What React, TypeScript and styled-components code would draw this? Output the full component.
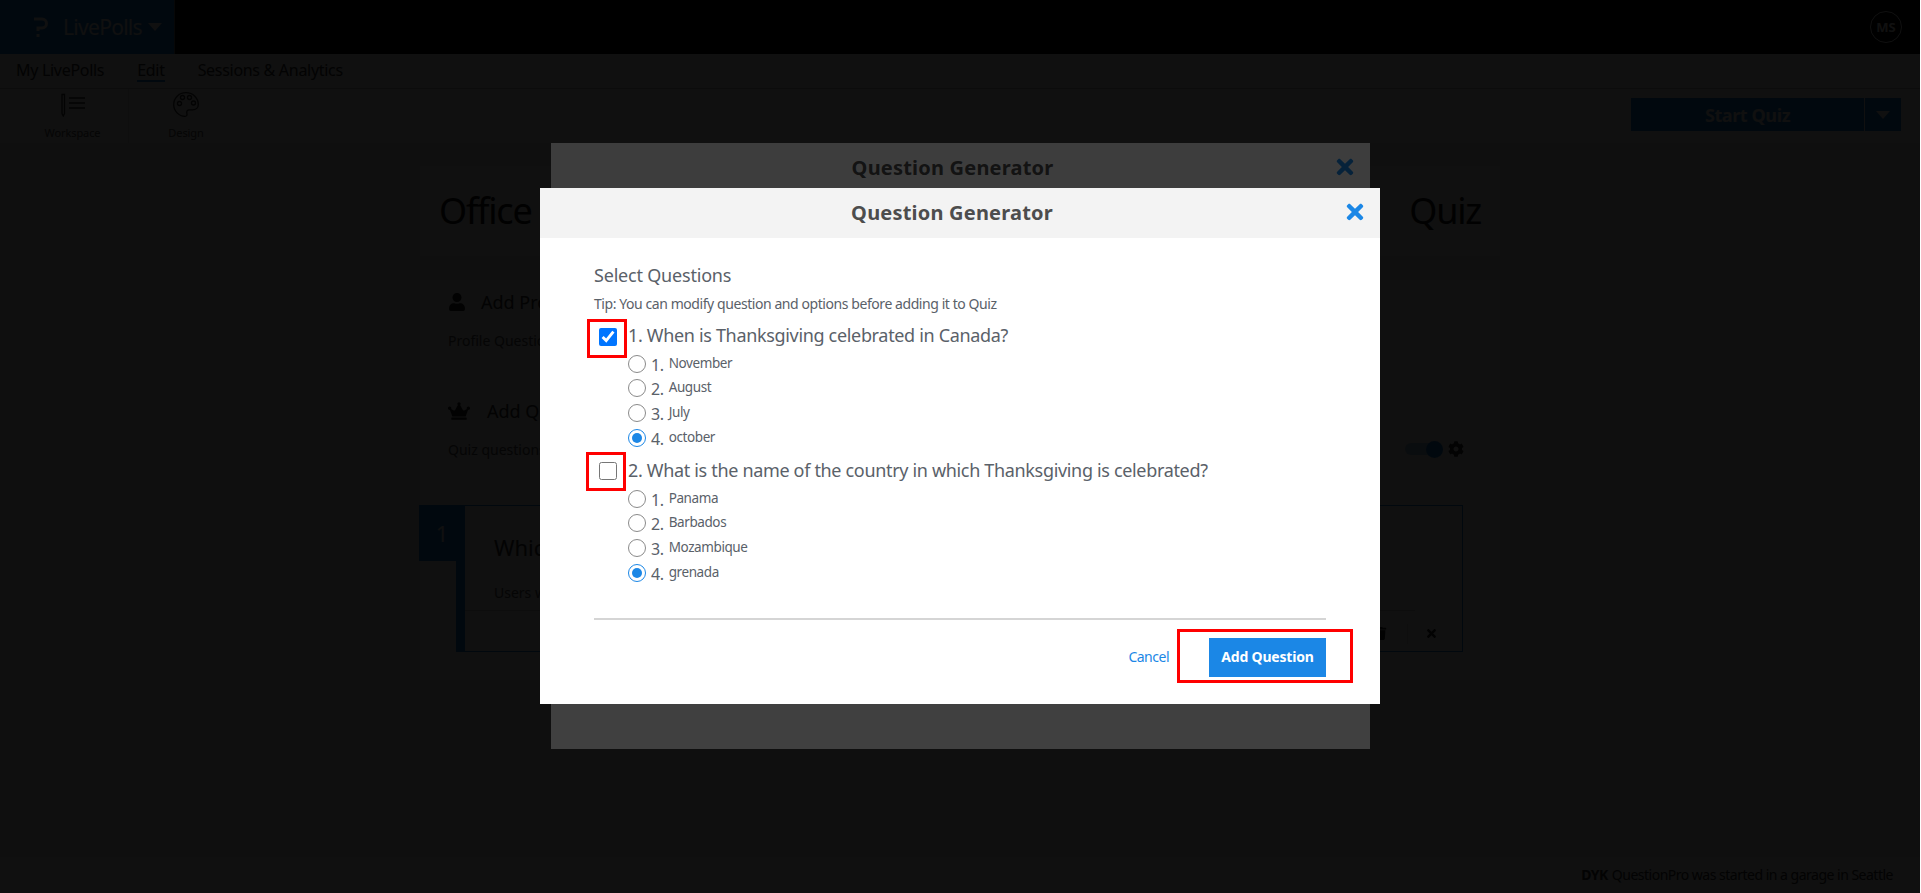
import { createGlobalStyle, styled } from "styled-components";
import { FaCog, FaCrown, FaTimes, FaTrash, FaUser } from "react-icons/fa";

const FONT = `"Noto Sans", "Open Sans", sans-serif`;

const questions = [
  {
    text: "1. When is Thanksgiving celebrated in Canada?",
    checked: true,
    options: ["November", "August", "July", "october"],
  },
  {
    text: "2. What is the name of the country in which Thanksgiving is celebrated?",
    checked: false,
    options: ["Panama", "Barbados", "Mozambique", "grenada"],
  },
];

const GlobalStyle = createGlobalStyle`
  html, body {
    margin: 0;
    height: 100%;
    overflow: hidden;
    background: #fff;
  }
  * { box-sizing: border-box; }
  #root {
    position: relative;
    width: 1920px;
    height: 893px;
    overflow: hidden;
    font-family: ${FONT};
  }
`;

const Page = styled.div`
  display: flex;
  flex-direction: column;
  height: 893px;
  background: #f0f0f0;
  color: #333;
`;

const TopBar = styled.header`
  display: flex;
  align-items: center;
  justify-content: space-between;
  height: 54px;
  padding-right: 18px;
  background: #000;
`;

const Brand = styled.div`
  display: flex;
  align-items: center;
  width: 175px;
  height: 54px;
  padding-left: 33px;
  background: #1b87e6;
  border-right: 1px solid #777;
  color: #fff;
  font-size: 21px;
`;

const BrandName = styled.span`
  margin: 0 6px 0 15px;
  letter-spacing: -0.7px;
`;

const Avatar = styled.div`
  display: flex;
  align-items: center;
  justify-content: center;
  width: 32px;
  height: 32px;
  border: 1px solid #fff;
  border-radius: 50%;
  color: #fff;
  font-size: 13px;
  font-weight: 700;
`;

const Nav = styled.nav`
  display: flex;
  gap: 33px;
  height: 34px;
  padding: 5px 16px 0;
  background: #fff;
  font-size: 16px;
  letter-spacing: -0.3px;
`;

const NavItem = styled.span<{ $active?: boolean }>`
  height: 23px;
  line-height: 22px;
  border-bottom: 2px solid ${(p) => (p.$active ? "#1b87e6" : "transparent")};
`;

const Toolbar = styled.div`
  display: flex;
  align-items: flex-start;
  height: 55px;
  padding-right: 19px;
  background: #fff;
  border-top: 1px solid #c8c8c8;
`;

const Tool = styled.div<{ $width: number; $inset?: number; $divided?: boolean }>`
  display: flex;
  flex-direction: column;
  align-items: center;
  width: ${(p) => p.$width}px;
  height: 54px;
  padding: 3px 0 0 ${(p) => p.$inset ?? 0}px;
  border-right: 1px solid ${(p) => (p.$divided ? "#e6e6e6" : "transparent")};
  font-size: 11px;
  letter-spacing: -0.1px;
  color: #555;
`;

const ToolLabel = styled.span`
  margin-top: 8px;
  line-height: 16px;
`;

const StartGroup = styled.div`
  display: flex;
  height: 33px;
  margin: 9px 0 0 auto;
  background: #1b87e6;
  color: #fff;
`;

const StartButton = styled.div`
  display: flex;
  align-items: center;
  justify-content: center;
  width: 234px;
  border-right: 1px solid #fff;
  font-size: 18px;
  font-weight: 700;
  letter-spacing: -0.4px;
`;

const StartCaret = styled.div`
  display: flex;
  align-items: center;
  justify-content: center;
  width: 36px;
`;

const Caret = styled.i`
  display: inline-block;
  width: 0;
  height: 0;
  border-left: 7px solid transparent;
  border-right: 7px solid transparent;
  border-top: 8px solid currentColor;
`;

const Content = styled.main`
  display: flex;
  flex-direction: column;
  width: 1080px;
  margin: 23px auto 0;
`;

const TitleCard = styled.div`
  display: flex;
  align-items: center;
  justify-content: space-between;
  height: 90px;
  padding: 0 19px 2px;
  background: #fff;
  font-size: 36px;
  letter-spacing: -1.2px;
  color: #111;
`;

const Panel = styled.section`
  height: 400px;
  margin-top: 24px;
  background: #fff;
`;

const Section = styled.div<{ $height: number }>`
  height: ${(p) => p.$height}px;
  padding: 12px 28px 0;
`;

const SectionHead = styled.div<{ $gap: number; $icon: number }>`
  display: flex;
  align-items: center;
  gap: ${(p) => p.$gap}px;
  height: 20px;
  font-size: 18px;
  svg { font-size: ${(p) => p.$icon}px; color: #222; }
`;

const SectionRow = styled.div`
  display: flex;
  align-items: center;
  justify-content: space-between;
  height: 20px;
  margin-top: 18px;
  font-size: 14px;
  color: #555;
`;

const Toggles = styled.div`
  display: flex;
  align-items: center;
  gap: 5px;
  margin-right: 8px;
  svg { font-size: 16px; color: #333; }
`;

const ToggleTrack = styled.div`
  display: flex;
  align-items: center;
  justify-content: flex-end;
  width: 38px;
  height: 12px;
  border-radius: 6px;
  background: #a9d2f5;
`;

const ToggleKnob = styled.div`
  flex: none;
  width: 17px;
  height: 17px;
  border-radius: 50%;
  background: #1b87e6;
`;

const QuestionCard = styled.div`
  display: flex;
  width: 1007px;
  height: 147px;
  margin-left: 36px;
  border: 1px solid #1b87e6;
  border-left: 9px solid #1b87e6;
`;

const QuestionNumber = styled.div`
  display: flex;
  align-items: center;
  justify-content: center;
  flex: none;
  width: 46px;
  height: 56px;
  margin: -1px 0 0 -46px;
  background: #1b87e6;
  color: #fff;
  font-size: 22px;
`;

const QuestionBody = styled.div`
  display: flex;
  flex-direction: column;
  flex: 1;
  padding-top: 27px;
`;

const QuestionTitle = styled.div`
  padding-left: 29px;
  font-size: 22px;
  line-height: 28px;
`;

const QuestionHint = styled.div`
  margin: 22px 47px 0 0;
  padding: 0 0 7px 29px;
  border-bottom: 1px solid #dcdcdc;
  font-size: 14px;
  line-height: 20px;
  color: #555;
`;

const QuestionActions = styled.div`
  display: flex;
  align-items: center;
  justify-content: flex-end;
  height: 35px;
  margin-top: auto;
  padding-right: 8px;
  font-size: 13px;
  color: #222;
`;

const ActionCell = styled.div<{ $width: number; $divided?: boolean }>`
  display: flex;
  align-items: center;
  justify-content: center;
  width: ${(p) => p.$width}px;
  height: 20px;
  border-left: 1px solid ${(p) => (p.$divided ? "#e6e6e6" : "transparent")};
`;

const StatusBar = styled.footer`
  display: flex;
  align-items: center;
  justify-content: flex-end;
  gap: 4px;
  height: 36px;
  margin-top: auto;
  padding: 0 27px 1px 0;
  background: #fff;
  font-size: 14px;
  letter-spacing: -0.5px;
  color: #333;
  b { font-weight: 700; }
`;

const Backdrop = styled.div`
  position: absolute;
  inset: 0;
  background: rgba(0, 0, 0, 0.75);
`;

const Modal = styled.div<{ $left: number; $top: number; $width: number; $height: number }>`
  position: absolute;
  left: ${(p) => p.$left}px;
  top: ${(p) => p.$top}px;
  width: ${(p) => p.$width}px;
  height: ${(p) => p.$height}px;
  background: #fff;
`;

const ModalHeader = styled.div<{ $height: number; $lift?: number }>`
  display: flex;
  align-items: center;
  justify-content: center;
  position: relative;
  height: ${(p) => p.$height}px;
  padding: 0 16px ${(p) => p.$lift ?? 0}px 0;
  background: #f3f3f3;
  color: #4d4d4d;
  font-size: 20px;
  font-weight: 700;
  letter-spacing: 0.2px;
  svg {
    position: absolute;
    right: 13px;
    color: #1b87e6;
    font-size: 24px;
  }
`;

const ModalBody = styled.div`
  display: flex;
  flex-direction: column;
  padding: 25px 54px 0;
  color: #5a6169;
`;

const Heading = styled.div`
  font-size: 18px;
  line-height: 24px;
  letter-spacing: -0.2px;
`;

const Tip = styled.div`
  margin-top: 7px;
  font-size: 14px;
  line-height: 20px;
  letter-spacing: -0.43px;
`;

const QuestionBlock = styled.div<{ $top: number }>`
  margin-top: ${(p) => p.$top}px;
`;

const QuestionRow = styled.div`
  display: flex;
  align-items: center;
  height: 26px;
  font-size: 18px;
  letter-spacing: -0.33px;
`;

const CheckWrap = styled.span`
  position: relative;
  display: block;
  width: 18px;
  height: 18px;
  margin: 3px 11px 0 5px;
  input {
    display: block;
    width: 18px;
    height: 18px;
    margin: 0;
  }
`;

const Highlight = styled.span<{ $l: number; $t: number; $r: number; $b: number }>`
  position: absolute;
  left: ${(p) => p.$l}px;
  top: ${(p) => p.$t}px;
  right: ${(p) => p.$r}px;
  bottom: ${(p) => p.$b}px;
  border: 3px solid #f00;
`;

const Options = styled.div<{ $top: number }>`
  margin: ${(p) => p.$top}px 0 0 34px;
`;

const OptionRow = styled.div`
  display: flex;
  align-items: center;
  height: 24.6px;
  font-size: 13.5px;
  letter-spacing: -0.4px;
`;

const Radio = styled.span<{ $on?: boolean }>`
  display: flex;
  align-items: center;
  justify-content: center;
  width: 18px;
  height: 18px;
  margin-right: 5px;
  border-radius: 50%;
  border: 1px solid ${(p) => (p.$on ? "#1b87e6" : "#8a8a8a")};
  &::after {
    content: "";
    width: 10px;
    height: 10px;
    border-radius: 50%;
    background: ${(p) => (p.$on ? "#1b87e6" : "transparent")};
  }
`;

const OptionIndex = styled.span`
  margin-right: 5px;
  padding-top: 2px;
  font-size: 16px;
`;

const OptionText = styled.span`
  padding-bottom: 2px;
`;

const Divider = styled.hr`
  height: 2px;
  margin: 33px 0 0;
  border: 0;
  background: #d5d5d5;
`;

const Footer = styled.div`
  display: flex;
  align-items: center;
  justify-content: flex-end;
  gap: 40px;
  margin-top: 18px;
`;

const CancelLink = styled.span`
  padding-bottom: 2px;
  color: #1b87e6;
  font-size: 14px;
  letter-spacing: -0.5px;
`;

const AddButton = styled.div`
  position: relative;
  display: flex;
  align-items: center;
  justify-content: center;
  width: 117px;
  height: 39px;
  padding-bottom: 2px;
  background: #1b87e6;
  color: #fff;
  font-size: 14px;
  font-weight: 700;
  letter-spacing: -0.2px;
`;

const LogoMark = () => (
  <svg width="15" height="21" viewBox="0 0 15 21" fill="none" stroke="#fff" strokeWidth="3">
    <path d="M1 2h8a4.5 4.5 0 0 1 0 9H5v3" />
    <path d="M5 17v3" />
  </svg>
);

const WorkspaceIcon = () => (
  <svg width="24" height="25" viewBox="0 0 24 25" fill="none" stroke="#333" strokeWidth="1.3">
    <path d="M1 2.500h2.500v19L2.250 24 1 21.500z" />
    <path d="M8 6h16M8 11h16M8 16h16" />
  </svg>
);

const DesignIcon = () => (
  <svg width="26" height="25" viewBox="0 0 26 25" fill="none" stroke="#333" strokeWidth="1.3">
    <path d="M13 .7C6 .7.7 6 .7 12.500c0 6.500 5.300 11.800 11.300 11.800 1.800 0 2.300-1.300 1.900-2.800-.6-2 .4-3.600 2.400-3.600h3.200c3.500 0 5.800-2.400 5.800-5.400C25.300 6 20 .7 13 .7z" />
    <circle cx="6.500" cy="11.500" r="2" />
    <circle cx="9.500" cy="5.500" r="2" />
    <circle cx="16.500" cy="5.500" r="2" />
    <circle cx="20.500" cy="11" r="2" />
  </svg>
);

export default function App() {
  return (
    <>
      <GlobalStyle />
      <Page>
        <TopBar>
          <Brand>
            <LogoMark />
            <BrandName>LivePolls</BrandName>
            <Caret />
          </Brand>
          <Avatar>MS</Avatar>
        </TopBar>
        <Nav>
          <NavItem>My LivePolls</NavItem>
          <NavItem $active>Edit</NavItem>
          <NavItem>Sessions &amp; Analytics</NavItem>
        </Nav>
        <Toolbar>
          <Tool $width={129} $inset={17} $divided>
            <WorkspaceIcon />
            <ToolLabel>Workspace</ToolLabel>
          </Tool>
          <Tool $width={115}>
            <DesignIcon />
            <ToolLabel>Design</ToolLabel>
          </Tool>
          <StartGroup>
            <StartButton>Start Quiz</StartButton>
            <StartCaret>
              <Caret />
            </StartCaret>
          </StartGroup>
        </Toolbar>
        <Content>
          <TitleCard>
            <span>Office</span>
            <span>Quiz</span>
          </TitleCard>
          <Panel>
            <Section $height={109}>
              <SectionHead $gap={15} $icon={18}>
                <FaUser />
                Add Profile
              </SectionHead>
              <SectionRow>Profile Question</SectionRow>
            </Section>
            <Section $height={116}>
              <SectionHead $gap={17} $icon={22}>
                <FaCrown />
                Add Quiz
              </SectionHead>
              <SectionRow>
                Quiz questions
                <Toggles>
                  <ToggleTrack>
                    <ToggleKnob />
                  </ToggleTrack>
                  <FaCog />
                </Toggles>
              </SectionRow>
            </Section>
            <QuestionCard>
              <QuestionNumber>1</QuestionNumber>
              <QuestionBody>
                <QuestionTitle>Which</QuestionTitle>
                <QuestionHint>Users will</QuestionHint>
                <QuestionActions>
                  <ActionCell $width={54}>
                    <FaTrash />
                  </ActionCell>
                  <ActionCell $width={47} $divided>
                    <FaTimes />
                  </ActionCell>
                </QuestionActions>
              </QuestionBody>
            </QuestionCard>
          </Panel>
        </Content>
        <StatusBar>
          <b>DYK</b> QuestionPro was started in a garage in Seattle
        </StatusBar>
      </Page>

      <Backdrop />
      <Modal $left={551} $top={143} $width={819} $height={606}>
        <ModalHeader $height={48}>
          Question Generator
          <FaTimes />
        </ModalHeader>
      </Modal>
      <Backdrop />

      <Modal $left={540} $top={188} $width={840} $height={516}>
        <ModalHeader $height={50} $lift={2}>
          Question Generator
          <FaTimes />
        </ModalHeader>
        <ModalBody>
          <Heading>Select Questions</Heading>
          <Tip>Tip: You can modify question and options before adding it to Quiz</Tip>
          {questions.map((q, i) => (
            <QuestionBlock key={q.text} $top={i === 0 ? 8 : 7}>
              <QuestionRow>
                <CheckWrap>
                  <input type="checkbox" checked={q.checked} readOnly />
                  <Highlight
                    $l={i === 0 ? -12 : -13}
                    $t={i === 0 ? -9 : -10}
                    $r={i === 0 ? -10 : -9}
                    $b={i === 0 ? -12 : -11}
                  />
                </CheckWrap>
                {q.text}
              </QuestionRow>
              <Options $top={i === 0 ? 3.6 : 3.5}>
                {q.options.map((opt, n) => (
                  <OptionRow key={opt}>
                    <Radio $on={n === 3} />
                    <OptionIndex>{n + 1}.</OptionIndex>
                    <OptionText>{opt}</OptionText>
                  </OptionRow>
                ))}
              </Options>
            </QuestionBlock>
          ))}
          <Divider />
          <Footer>
            <CancelLink>Cancel</CancelLink>
            <AddButton>
              Add Question
              <Highlight $l={-32} $t={-9} $r={-27} $b={-6} />
            </AddButton>
          </Footer>
        </ModalBody>
      </Modal>
    </>
  );
}
